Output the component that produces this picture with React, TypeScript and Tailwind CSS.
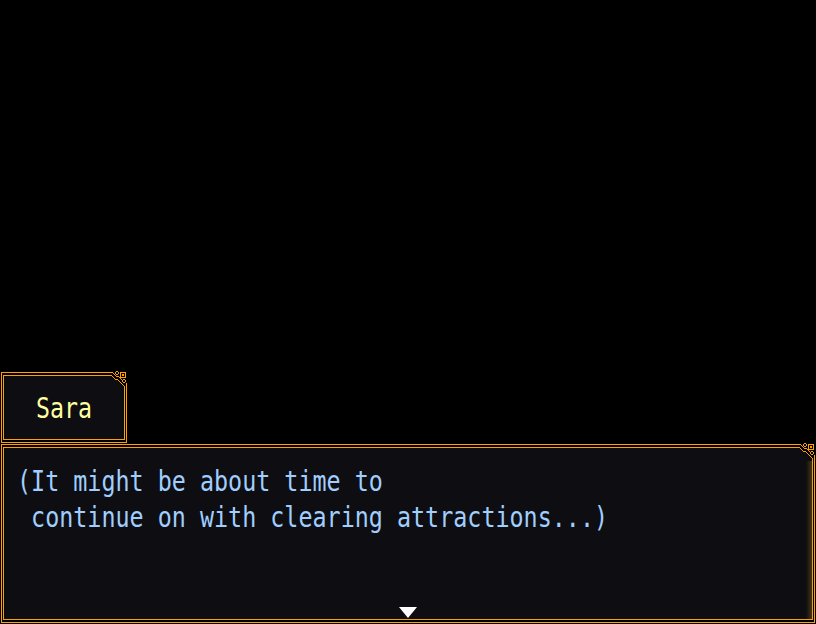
const frame = "#ffa000";

// tiny pixel flourish sitting on the top-right corner of each window frame
const outerPx = [
  [0, 1], [1, 1], [2, 1], [3, 2], [4, 3], [5, 4], [6, 5], [7, 5], [8, 5],
  [9, 6], [10, 7], [11, 8], [16, 12], [16, 13], [16, 14], [16, 15], [16, 16], [16, 17],
];
const innerPx = [
  [0, 4], [1, 4], [2, 5], [3, 6], [4, 7], [5, 8], [6, 8], [7, 8], [8, 9],
  [9, 10], [10, 11], [11, 12], [12, 13], [13, 14], [14, 15], [14, 16], [14, 17],
];
const ringA = [[6, 0], [7, 0], [5, 1], [8, 1], [5, 2], [8, 2], [6, 3], [7, 3]];
const ringC = [[13, 8], [14, 8], [12, 9], [15, 9], [12, 10], [15, 10], [13, 11], [14, 11]];

function Corner() {
  const px = [...outerPx, ...innerPx, ...ringA, ...ringC];
  return (
    <svg
      width="18"
      height="18"
      viewBox="0 0 18 18"
      shapeRendering="crispEdges"
      className="absolute -right-[2px] -top-[2px]"
    >
      <rect x="0" y="0" width="18" height="18" fill="#000" />
      <polygon points="0,5 2,5 5,8 8,9 14,15 14,18 0,18" fill="#0e0e12" />
      {px.map(([x, y], i) => (
        <rect key={i} x={x} y={y} width="1" height="1" fill={frame} />
      ))}
      <rect x="10.5" y="1.5" width="5" height="5" fill="none" stroke={frame} strokeWidth="1" />
      <rect x="12" y="3" width="2" height="2" fill={frame} />
    </svg>
  );
}

export default function App() {
  return (
    <div className="flex h-[624px] w-[816px] flex-col overflow-hidden bg-black pt-[372px] font-['DejaVu_Sans_Mono',monospace] text-[29px] leading-[36px]">
      {/* name box */}
      <div className="relative ml-px h-[71px] w-[126px] border border-[#ffa000] bg-black px-px py-[2px]">
        <div className="flex h-full items-center justify-center border border-[#ffa000] bg-[#0e0e12]">
          <span className="inline-block scale-x-[0.802] text-[#ffffa0]">Sara</span>
        </div>
        <Corner />
      </div>

      {/* message window */}
      <div className="relative ml-px mt-px h-[179px] w-[814px] border border-[#ffa000] bg-black px-px py-[2px]">
        <div className="relative h-full border border-[#ffa000] bg-[#0e0e12] pl-[13px] pt-[15px]">
          <p className="origin-left scale-x-[0.806] whitespace-pre text-[#a0cfff]">
            {"(It might be about time to\n continue on with clearing attractions...)"}
          </p>
          <div className="absolute right-0 top-0 h-full w-[6px] bg-linear-to-r from-transparent to-[#ffa000]/25" />
          <svg
            width="18"
            height="11"
            viewBox="0 0 18 11"
            className="absolute bottom-px left-1/2 -translate-x-1/2"
          >
            <polygon points="0,0 18,0 9,11" fill="#fff" />
          </svg>
        </div>
        <Corner />
      </div>
    </div>
  );
}
